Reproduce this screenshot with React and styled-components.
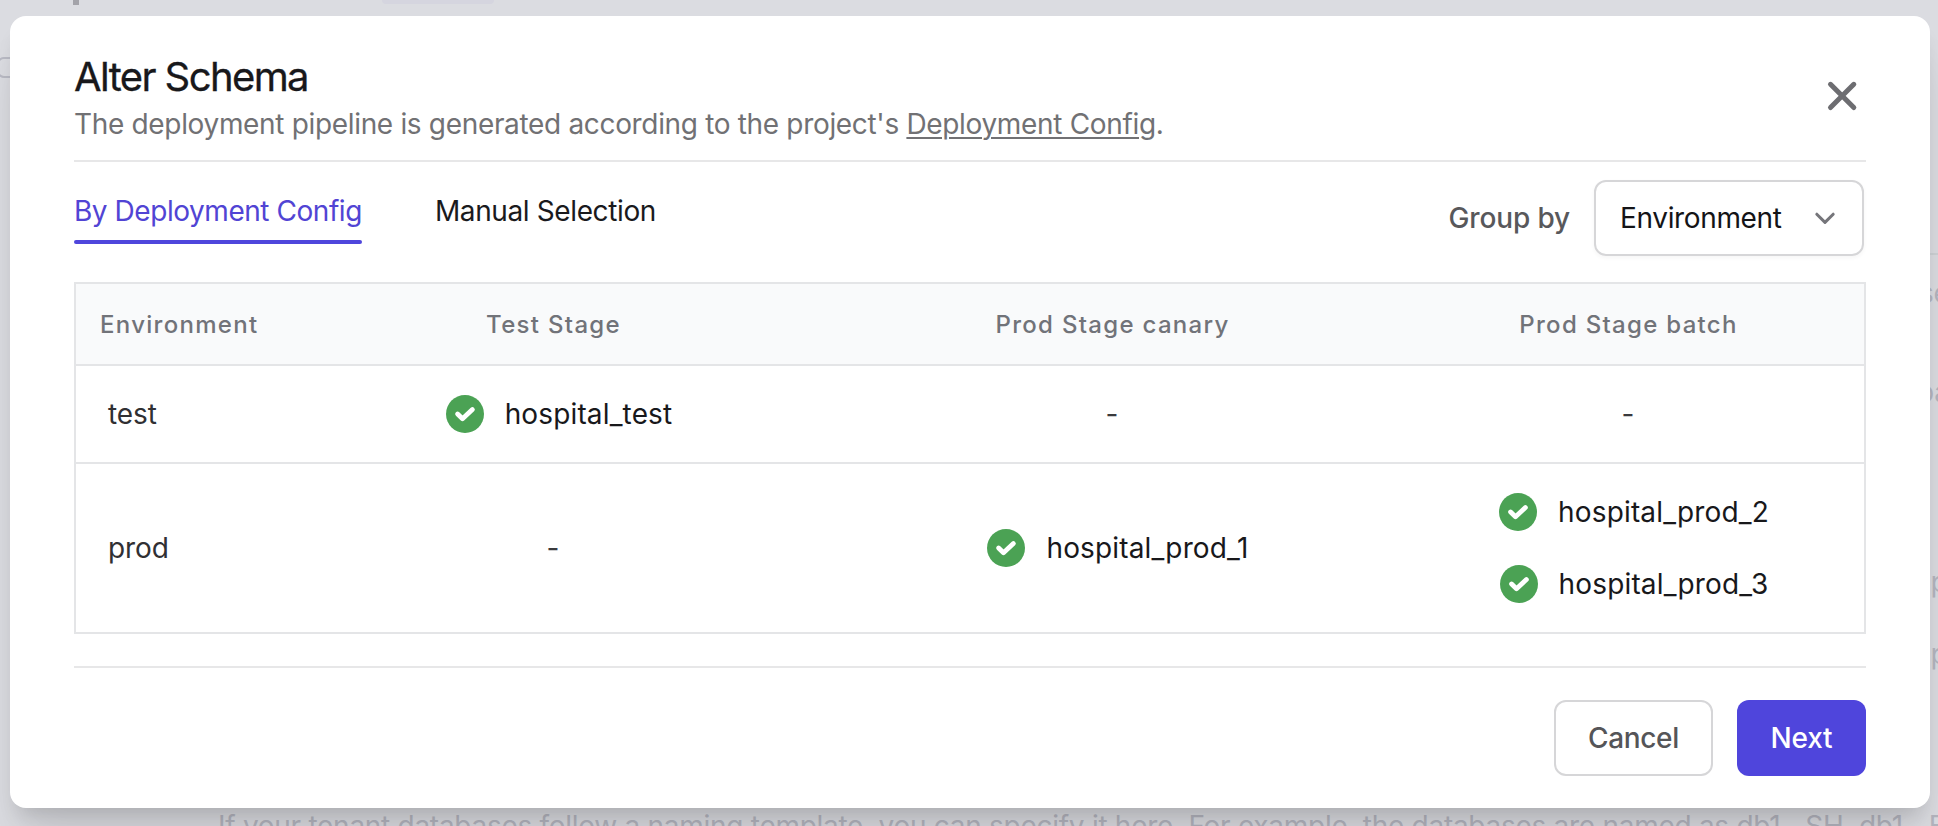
import React from 'react';
import styled, { createGlobalStyle } from 'styled-components';

const GlobalStyle = createGlobalStyle`
  *, *::before, *::after { box-sizing: border-box; }
  body { margin: 0; font-family: Inter, "Liberation Sans", sans-serif; }
  button { font-family: inherit; }
`;

const Screen = styled.div`
  position: relative;
  width: 1938px;
  height: 826px;
  overflow: hidden;
  background: #dbdce1;
`;

const Behind = styled.div`
  display: grid;
  grid-template-columns: 1915px 1fr;
  height: 826px;
  color: #b4b5bf;
  font-size: 28px;
  line-height: 40px;
  letter-spacing: -0.28px;
`;

const BehindMain = styled.div`
  display: flex;
  flex-direction: column;
  justify-content: space-between;
`;

const BehindTop = styled.div`
  display: flex;
  padding-left: 73px;
  gap: 303px;
`;

const Mark = styled.span`
  width: 6px;
  height: 5px;
  background: #a3a3a9;
`;

const Chip = styled.span`
  width: 112px;
  height: 4px;
  border-radius: 0 0 4px 4px;
  background: #d5d5df;
`;

const Knob = styled.span`
  width: 22px;
  height: 21px;
  margin: 52px 0 auto -3px;
  border: 2px solid #b9bac4;
  border-radius: 7px;
`;

const Hint = styled.div`
  height: 20px;
  margin-left: 218px;
  white-space: nowrap;
`;

const BehindEdge = styled.div`
  display: flex;
  flex-direction: column;
  overflow: hidden;
  white-space: nowrap;
`;

const EdgeRule = styled.div`
  height: 2px;
  margin-top: 253px;
  background: #cdd1d4;
`;

const EdgeText = styled.div`
  margin-top: ${(p) => p.$gap}px;
  padding-left: ${(p) => p.$indent}px;
`;

const Modal = styled.div`
  position: absolute;
  top: 16px;
  left: 10px;
  width: 1920px;
  height: 792px;
  padding: 32px 64px;
  display: flex;
  flex-direction: column;
  background: #fff;
  border-radius: 16px;
  box-shadow: 0 40px 50px -10px rgba(0, 0, 0, 0.1), 0 14px 20px -8px rgba(0, 0, 0, 0.14);
`;

const Header = styled.header`
  display: flex;
  justify-content: space-between;
  height: 114px;
  padding-right: 8px;
  border-bottom: 2px solid #e7e7e8;
`;

const Title = styled.h1`
  margin: 0;
  padding-top: 1px;
  font-size: 40px;
  font-weight: 400;
  line-height: 55px;
  letter-spacing: -1.6px;
  color: #18181b;
  -webkit-text-stroke: 0.3px currentColor;
`;

const Subtitle = styled.p`
  margin: 0;
  font-size: 28px;
  line-height: 40px;
  letter-spacing: -0.33px;
  color: #717174;
`;

const ConfigLink = styled.a`
  text-decoration: underline;
  text-decoration-thickness: 2px;
  text-underline-offset: 3px;
`;

const CloseButton = styled.button`
  display: flex;
  width: 32px;
  height: 32px;
  margin-top: 32px;
  padding: 0;
  border: 0;
  background: none;
`;

const Toolbar = styled.div`
  display: flex;
  align-items: flex-start;
  justify-content: space-between;
  padding: 18px 2px 26px 0;
`;

const Tabs = styled.div`
  display: flex;
  gap: 73px;
  margin-top: 11px;
`;

const Tab = styled.div`
  height: 53px;
  font-size: 28px;
  line-height: 40px;
  letter-spacing: ${(p) => (p.$active ? -0.45 : -0.38)}px;
  white-space: nowrap;
  color: ${(p) => (p.$active ? '#5144d4' : '#1a1a1d')};

  &::after {
    content: '';
    display: block;
    height: 4px;
    margin-top: 9px;
    border-radius: 2px;
    background: ${(p) => (p.$active ? '#4f46dc' : 'transparent')};
  }
`;

const GroupBy = styled.div`
  display: flex;
  align-items: center;
  gap: 24px;
`;

const GroupLabel = styled.span`
  font-size: 28px;
  font-weight: 500;
  letter-spacing: -0.15px;
  color: #58585b;
`;

const Select = styled.div`
  display: flex;
  align-items: center;
  justify-content: space-between;
  width: 270px;
  height: 76px;
  padding: 0 25px 0 24px;
  border: 2px solid #d6d6d8;
  border-radius: 12px;
  font-size: 28px;
  letter-spacing: -0.35px;
  color: #141417;
  box-shadow: 0 2px 4px rgba(0, 0, 0, 0.04);
`;

const Table = styled.div`
  display: grid;
  grid-template-rows: 82px 98px 168px;
  height: 352px;
  border: 2px solid #e4e5e7;
`;

const Row = styled.div`
  display: grid;
  grid-template-columns: 198px 558px 560px 1fr;
  border-bottom: 2px solid #e4e5e7;

  &:last-child { border-bottom: 0; }
`;

const HeadRow = styled(Row)`
  background: #f9fafb;
`;

const HeadCell = styled.div`
  display: flex;
  align-items: center;
  justify-content: ${(p) => (p.$first ? 'flex-start' : 'center')};
  padding-left: ${(p) => (p.$first ? 24 : 1)}px;
  font-size: 24px;
  font-weight: 500;
  letter-spacing: 1.3px;
  white-space: nowrap;
  color: #717379;
`;

const EnvCell = styled.div`
  display: flex;
  align-items: center;
  padding: 0 0 1px 32px;
  font-size: 28px;
  letter-spacing: -0.1px;
  color: #303033;
`;

const StageCell = styled.div`
  display: flex;
  flex-direction: column;
  align-items: center;
  justify-content: center;
  gap: 32px;
  font-size: 28px;
  line-height: 40px;
  color: #3a3a3d;
`;

const Database = styled.div`
  display: flex;
  align-items: center;
  gap: 21px;
  height: 40px;
  padding-left: 12px;
  letter-spacing: 0.15px;
  color: #18181b;
`;

const DatabaseName = styled.span`
  padding-bottom: 1px;
`;

const Footer = styled.footer`
  display: flex;
  justify-content: flex-end;
  gap: 24px;
  margin-top: 32px;
  padding-top: 32px;
  border-top: 2px solid #e7e7e8;
`;

const Button = styled.button`
  width: ${(p) => (p.$primary ? 129 : 159)}px;
  height: 76px;
  padding: 0;
  border: ${(p) => (p.$primary ? '0' : '2px solid #d6d6d8')};
  border-radius: 12px;
  background: ${(p) => (p.$primary ? '#4f45dc' : '#fff')};
  color: ${(p) => (p.$primary ? '#fff' : '#555558')};
  font-size: 28px;
  font-weight: 500;
  letter-spacing: ${(p) => (p.$primary ? -0.2 : -0.35)}px;
`;

function CloseIcon() {
  return (
    <svg width="32" height="32" viewBox="0 0 32 32" fill="none" stroke="#6d6d71" strokeWidth="5" strokeLinecap="round">
      <path d="M4.5 4.3 27.8 27.6M27.8 4.3 4.5 27.6" />
    </svg>
  );
}

function ChevronIcon() {
  return (
    <svg width="24" height="24" viewBox="0 0 24 24" fill="none" stroke="#75757a" strokeWidth="3" strokeLinecap="round" strokeLinejoin="round">
      <path d="M3.8 8.2 12 16.4 20.2 8.2" />
    </svg>
  );
}

function CheckIcon() {
  return (
    <svg width="38" height="38" viewBox="0 0 38 38" fill="none">
      <circle cx="19" cy="19" r="19" fill="#4ba254" />
      <path d="M11.6 19 16.5 23.8 26.4 14.6" stroke="#fff" strokeWidth="4.8" strokeLinecap="round" strokeLinejoin="round" />
    </svg>
  );
}

const STAGES = ['Test Stage', 'Prod Stage canary', 'Prod Stage batch'];

const ROWS = [
  { env: 'test', stages: [['hospital_test'], [], []] },
  { env: 'prod', stages: [[], ['hospital_prod_1'], ['hospital_prod_2', 'hospital_prod_3']] },
];

export default function App() {
  return (
    <Screen>
      <GlobalStyle />
      <Behind>
        <BehindMain>
          <BehindTop>
            <Mark />
            <Chip />
          </BehindTop>
          <Knob />
          <Hint>
            If your tenant databases follow a naming template, you can specify it here. For example, the databases are
            named as db1__SH, db1__BJ
          </Hint>
        </BehindMain>
        <BehindEdge>
          <EdgeRule />
          <EdgeText $gap={18} $indent={4}>se</EdgeText>
          <EdgeText $gap={59} $indent={2}>ba</EdgeText>
          <EdgeText $gap={150} $indent={0}>ap</EdgeText>
          <EdgeText $gap={32} $indent={0}>ap</EdgeText>
        </BehindEdge>
      </Behind>
      <Modal>
        <Header>
          <div>
            <Title>Alter Schema</Title>
            <Subtitle>
              The deployment pipeline is generated according to the project's <ConfigLink>Deployment Config</ConfigLink>.
            </Subtitle>
          </div>
          <CloseButton aria-label="Close">
            <CloseIcon />
          </CloseButton>
        </Header>
        <Toolbar>
          <Tabs>
            <Tab $active>By Deployment Config</Tab>
            <Tab>Manual Selection</Tab>
          </Tabs>
          <GroupBy>
            <GroupLabel>Group by</GroupLabel>
            <Select>
              Environment
              <ChevronIcon />
            </Select>
          </GroupBy>
        </Toolbar>
        <Table>
          <HeadRow>
            <HeadCell $first>Environment</HeadCell>
            {STAGES.map((stage) => (
              <HeadCell key={stage}>{stage}</HeadCell>
            ))}
          </HeadRow>
          {ROWS.map((row) => (
            <Row key={row.env}>
              <EnvCell>{row.env}</EnvCell>
              {row.stages.map((databases, i) => (
                <StageCell key={STAGES[i]}>
                  {databases.length === 0
                    ? '-'
                    : databases.map((name) => (
                        <Database key={name}>
                          <CheckIcon />
                          <DatabaseName>{name}</DatabaseName>
                        </Database>
                      ))}
                </StageCell>
              ))}
            </Row>
          ))}
        </Table>
        <Footer>
          <Button>Cancel</Button>
          <Button $primary>Next</Button>
        </Footer>
      </Modal>
    </Screen>
  );
}
